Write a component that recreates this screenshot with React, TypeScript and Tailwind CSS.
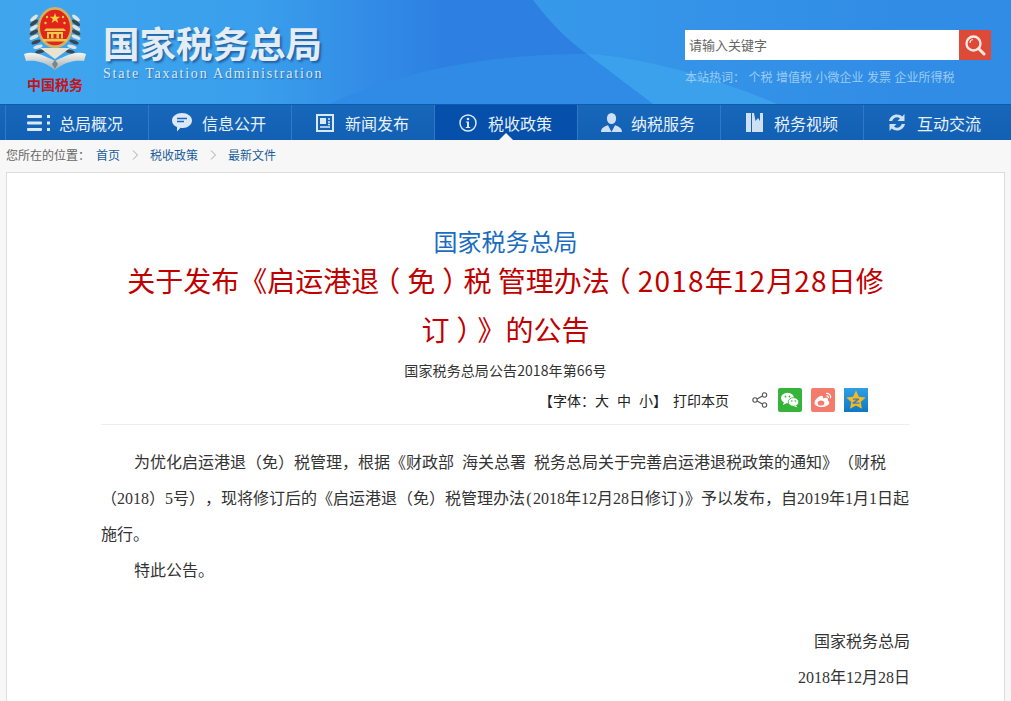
import React from "react";

const CJK = "font-['Noto_Sans_CJK_SC',sans-serif]";

function Emblem() {
  const leaves = [0, 1, 2, 3, 4, 5, 6, 7];
  return (
    <svg width="64" height="65" viewBox="0 0 64 65" className="block">
      <defs>
        <linearGradient id="rib" x1="0" y1="0" x2="0" y2="1">
          <stop offset="0" stopColor="#f6f6ef" />
          <stop offset="1" stopColor="#9fadb4" />
        </linearGradient>
      </defs>
      {leaves.map((i) => {
        const y = 11 + i * 4.800;
        const dx = i > 4 ? (i - 4) * 2 : 0;
        return (
          <g key={i}>
            <ellipse cx={11 + dx} cy={y} rx="4.800" ry="1.800" fill={i % 2 ? "#3a474e" : "#dfe4e0"} transform={`rotate(${-40 + i * 4} ${11 + dx} ${y})`} />
            <ellipse cx={53 - dx} cy={y} rx="4.800" ry="1.800" fill={i % 2 ? "#3a474e" : "#dfe4e0"} transform={`rotate(${40 - i * 4} ${53 - dx} ${y})`} />
          </g>
        );
      })}
      <ellipse cx="32" cy="20.500" rx="17.500" ry="20.500" fill="#d3b25e" />
      <ellipse cx="32" cy="20.500" rx="15" ry="17.800" fill="#e2241c" />
      <path d="M32 6l1.300 3.800h4l-3.200 2.300 1.200 3.800-3.300-2.300-3.300 2.300 1.200-3.800-3.200-2.300h4z" fill="#f6d23c" />
      <circle cx="24" cy="10" r="1.200" fill="#f6d23c" />
      <circle cx="40" cy="10" r="1.200" fill="#f6d23c" />
      <circle cx="22.500" cy="16" r="1.200" fill="#f6d23c" />
      <circle cx="41.500" cy="16" r="1.200" fill="#f6d23c" />
      <path d="M21 24h22l-2-2.500H23zM24 25h16v6.500H24z" fill="#f0c84a" />
      <path d="M30.500 27h3v4.500h-3zM26 27h2v4.500h-2zM36 27h2v4.500h-2z" fill="#e2241c" />
      <path d="M20 32h24v2.500H20z" fill="#f0c84a" />
      <path d="M1 47c8-3 16-1 31 7 15-8 23-10 31-7l-2 7c-10-1-19 1-29 9-10-8-19-10-29-9z" fill="url(#rib)" />
      <path d="M17 41h30L32 52z" fill="#e9e4d2" />
      <path d="M29 57l3-4 3 4-3 5z" fill="#79858a" />
    </svg>
  );
}

function MenuIcon() {
  return (
    <svg width="24" height="18" viewBox="0 0 24 18" fill="#dbe8f6">
      <rect x="0" y="1" width="15" height="3" rx="1" />
      <rect x="0" y="7.500" width="15" height="3" rx="1" />
      <rect x="0" y="14" width="15" height="3" rx="1" />
      <rect x="20" y="1" width="3" height="3" />
      <rect x="20" y="7.500" width="3" height="3" />
      <rect x="20" y="14" width="3" height="3" />
    </svg>
  );
}

function ChatIcon() {
  return (
    <svg width="20" height="19" viewBox="0 0 20 19">
      <path d="M10 0c5.500 0 10 3.300 10 7.500S15.500 15 11 15c-1 0-2-.1-2.500-.2L5 18.500v-4.500C2 13 0 10.500 0 7.500 0 3.300 4.500 0 10 0z" fill="#dbe8f6" />
      <path d="M5 5.500h10M5 8.500h7" stroke="#1a66b8" strokeWidth="1.500" />
    </svg>
  );
}

function NewsIcon() {
  return (
    <svg width="18" height="18" viewBox="0 0 18 18" fill="none">
      <rect x="1" y="1" width="16" height="16" stroke="#dbe8f6" strokeWidth="2" />
      <rect x="4" y="4" width="6" height="6" fill="#dbe8f6" />
      <path d="M4 13h10M12 5h2M12 8h2M12 10.500h2" stroke="#dbe8f6" strokeWidth="1.500" />
    </svg>
  );
}

function InfoIcon() {
  return (
    <svg width="18" height="18" viewBox="0 0 18 18" fill="none">
      <circle cx="9" cy="9" r="8" stroke="#dbe8f6" strokeWidth="1.500" />
      <circle cx="9" cy="5" r="1.300" fill="#dbe8f6" />
      <path d="M7 7.500h3v5.500h1.200v1H6.800v-1H8V8.500H7z" fill="#dbe8f6" />
    </svg>
  );
}

function UserIcon() {
  return (
    <svg width="21" height="19" viewBox="0 0 21 19" fill="#cfe0f3">
      <ellipse cx="10.500" cy="5.500" rx="4.600" ry="5.500" />
      <path d="M0 19c0-4 3-5.500 7-6.800l3.500 6.800 3.500-6.800c4 1.300 7 2.800 7 6.800z" />
    </svg>
  );
}

function VideoIcon() {
  return (
    <svg width="17" height="19" viewBox="0 0 17 19" fill="#cfe0f3">
      <rect x="0" y="0" width="5" height="19" />
      <path d="M6 0h2l1.500 8L12 5l2 3V0h3v19H6z" />
    </svg>
  );
}

function SwapIcon() {
  return (
    <svg width="18" height="17" viewBox="0 0 18 17" fill="#cfe0f3">
      <path d="M1 7c1-4 4-6.500 8-6.500 2.200 0 4 .8 5.200 2L16.500 0v7H9.500l2.500-2.500C11 3.700 10 3.300 9 3.300 6.800 3.300 5 4.800 4.200 7z" />
      <path d="M17 10c-1 4-4 6.500-8 6.500-2.200 0-4-.8-5.200-2L1.500 17v-7h7L6 12.500c1 .8 2 1.200 3 1.200 2.200 0 4-1.500 4.800-3.700z" />
    </svg>
  );
}

function Chevron() {
  return (
    <span className="flex w-[30px] justify-center">
      <svg width="6" height="10" viewBox="0 0 6 10" fill="none" stroke="#a3a9ad">
        <path d="M1 .5L5.500 5 1 9.500" />
      </svg>
    </span>
  );
}

function Paren({ children }: { children: string }) {
  return <span className="inline-block w-[28px] text-center [font-feature-settings:'halt']">{children}</span>;
}

function Digits({ children }: { children: string }) {
  return <span className="tracking-[1.200px]">{children}</span>;
}

function Half({ children }: { children: string }) {
  return <span className="px-[1.330px]">{children}</span>;
}

function Wechat() {
  return (
    <svg width="24" height="24" viewBox="0 0 24 24" className="block">
      <rect width="24" height="24" rx="2" fill="#36b43a" />
      <ellipse cx="9.500" cy="10" rx="6.500" ry="5.300" fill="#fff" />
      <path d="M6 14l-1 3 3.500-1.800z" fill="#fff" />
      <ellipse cx="15.500" cy="14" rx="5.300" ry="4.300" fill="#fff" stroke="#36b43a" strokeWidth="0.800" />
      <path d="M18 17.500l1.500 2-3.500-1.200z" fill="#fff" />
      <circle cx="7.500" cy="8.500" r="0.900" fill="#36b43a" />
      <circle cx="11.500" cy="8.500" r="0.900" fill="#36b43a" />
      <circle cx="13.800" cy="13" r="0.800" fill="#36b43a" />
      <circle cx="17.200" cy="13" r="0.800" fill="#36b43a" />
    </svg>
  );
}

function Weibo() {
  return (
    <svg width="24" height="24" viewBox="0 0 24 24" className="block">
      <rect width="24" height="24" rx="2" fill="#f47a6c" />
      <path d="M10.500 19c-4 0-7-1.800-7-4.300 0-2.700 4.500-7 7-7 1.800 0 1.800 1.700 1.500 2.800 2.500-1 5-1 5 1 .1.400 0 .8-.2 1.200 1 .4 1.500 1 1.500 2 0 2.300-3.600 4.300-7.800 4.300z" fill="#fff" />
      <ellipse cx="10" cy="15" rx="3.300" ry="2.600" fill="#f47a6c" />
      <path d="M15 5.500c3-.6 5.300 1.800 4.500 4.800M15.400 8c1.500-.2 2.300.8 2 2" stroke="#fff" strokeWidth="1.200" fill="none" />
    </svg>
  );
}

function Qzone() {
  return (
    <svg width="24" height="24" viewBox="0 0 24 24" className="block">
      <defs>
        <linearGradient id="qz" x1="0" y1="0" x2="0" y2="1">
          <stop offset="0" stopColor="#2f9fe6" />
          <stop offset="1" stopColor="#0f78c4" />
        </linearGradient>
      </defs>
      <rect width="24" height="24" fill="url(#qz)" />
      <path d="M12 2.500l2.900 6.200 6.800.8-5 4.600 1.300 6.700L12 17.500l-6 3.300 1.300-6.700-5-4.600 6.800-.8z" fill="#f7b81f" />
      <path d="M9 10.500h6v1.200l-3.500 2.800H15.500v1.300H8.500v-1.200l3.800-2.900H9z" fill="#3f7fc0" />
    </svg>
  );
}

const nav: [string, React.ReactNode][] = [
  ["总局概况", <MenuIcon />],
  ["信息公开", <ChatIcon />],
  ["新闻发布", <NewsIcon />],
  ["税收政策", <InfoIcon />],
  ["纳税服务", <UserIcon />],
  ["税务视频", <VideoIcon />],
  ["互动交流", <SwapIcon />],
];

export default function App() {
  return (
    <div className={`h-[701px] w-[1011px] overflow-hidden bg-[#f7f7f7] [text-spacing-trim:space-all] ${CJK}`}>
      <header className="relative h-[104px] overflow-hidden bg-[linear-gradient(90deg,#3fa6ee_0%,#3a9fec_25%,#2d80e2_44%,#2d80e2_60%)]">
        <svg className="absolute inset-0" width="1011" height="104" viewBox="0 0 1011 104">
          <defs>
            <linearGradient id="hdr" x1="533" y1="0" x2="900" y2="0" gradientUnits="userSpaceOnUse">
              <stop offset="0" stopColor="#3799ea" />
              <stop offset="1" stopColor="#318ce5" />
            </linearGradient>
          </defs>
          <path d="M533 0C550 22 565 38 587 54L653 104H1011V0z" fill="url(#hdr)" />
          <path d="M330 104C400 70 500 53 587 54L653 104z" fill="#2f8be6" />
          <path d="M587 54C650 58 720 80 777 104H653z" fill="#3ba1ed" />
        </svg>
        <div className="relative flex h-full">
          <div className="ml-[23px] flex w-[64px] flex-col items-center pt-[7px]">
            <Emblem />
            <div className="w-[60px] whitespace-nowrap text-center text-[14px] leading-[24px] font-bold text-[#c4131a]">
              中国税务
            </div>
          </div>
          <div className="ml-[16px] pt-[23px]">
            <div className="whitespace-nowrap text-[36.500px] leading-[40px] font-bold text-[#e4edf4] [text-shadow:2px_2px_2px_rgba(20,60,120,0.6)]">
              国家税务总局
            </div>
            <div className="mt-[2px] whitespace-nowrap text-[14px] leading-[18px] tracking-[1.820px] text-[#dbe8f2] font-['Liberation_Serif',serif] [text-shadow:1px_1px_1px_rgba(20,60,120,0.5)]">
              State Taxation Administration
            </div>
          </div>
          <div className="ml-auto mr-[20px] pt-[30px]">
            <div className="flex h-[30px] w-[306px]">
              <div className="flex flex-1 items-center bg-white pb-[1px] pl-[4px] text-[13px] text-[#666]">请输入关键字</div>
              <div className="flex w-[32px] items-center justify-center bg-[#dd4a38]">
                <svg width="22" height="22" viewBox="0 0 22 22" fill="none" stroke="#f8e8e4">
                  <circle cx="9.500" cy="9.500" r="7" strokeWidth="2.400" />
                  <path d="M15 15l5 5" strokeWidth="3" strokeLinecap="round" />
                  <path d="M6 9c0-2 1.300-3.300 3-3.500" strokeWidth="1.200" />
                </svg>
              </div>
            </div>
            <div className="mt-[8px] flex gap-[3.500px] whitespace-nowrap text-[12px] leading-[18px] text-[#9accf3]">
              <span>本站热词：</span>
              <span>个税</span>
              <span>增值税</span>
              <span>小微企业</span>
              <span>发票</span>
              <span>企业所得税</span>
            </div>
          </div>
        </div>
      </header>

      <nav className="h-[36px] border-t border-[#0f5cab] bg-[linear-gradient(180deg,#1767bb,#1260b3)] pl-[5px]">
        <div className="flex h-[35px]">
          {nav.map(([label, icon], i) => (
            <div
              key={label}
              className={`relative flex h-full w-[143px] items-center border-l border-[#3079c6] ${i === 3 ? "bg-[#0650ab]" : ""}`}
            >
              <div className="ml-[13px] flex w-[40px] items-center justify-center">{icon}</div>
              <span className="pt-[1px] text-[16px] leading-[35px] whitespace-nowrap text-[#e8f0f8]">{label}</span>
              {i === 3 && (
                <div className="absolute bottom-0 left-[71px] h-0 w-0 -translate-x-1/2 border-x-[7px] border-b-[7px] border-x-transparent border-b-[#f7f7f7]" />
              )}
            </div>
          ))}
        </div>
      </nav>

      <div className="flex h-[32px] items-center pb-[2px] pl-[6px] text-[12px] whitespace-nowrap text-[#666]">
        <span className="w-[90px]">您所在的位置：</span>
        <span className="text-[#1a5c9a]">首页</span>
        <Chevron />
        <span className="text-[#1a5c9a]">税收政策</span>
        <Chevron />
        <span className="text-[#1a5c9a]">最新文件</span>
      </div>

      <main className="mx-[6px] h-[600px] border border-[#dcdcdc] bg-white px-[94px] pt-[51px]">
        <h2 className="text-center text-[24px] leading-[34px] text-[#1a6dbf]">国家税务总局</h2>
        <h1 className="mt-[-2px] text-center text-[28px] leading-[49px] text-[#c00000]">
          关于发布《启运港退<Paren>（</Paren>免<Paren>）</Paren>税 管理办法<Paren>（</Paren><Digits>2018</Digits>年<Digits>12</Digits>月<Digits>28</Digits>日修
          <br />
          订<Paren>）</Paren>》的公告
        </h1>
        <p className="mt-[4px] text-center text-[14px] leading-[24px] tracking-[0.100px] text-[#333]">国家税务总局公告2018年第66号</p>
        <div className="mt-[3px] flex h-[30px] items-center pl-[438px] text-[14px] whitespace-nowrap text-[#222]">
          <span className="w-[134px]">
            【字体：<span>大</span>
            <span className="ml-[8px]">中</span>
            <span className="ml-[8px]">小</span>】
          </span>
          <span className="w-[79px]">打印本页</span>
          <svg width="16" height="16" viewBox="0 0 16 16" fill="none" stroke="#555" strokeWidth="1.100" className="mr-[10px]">
            <circle cx="12.500" cy="3" r="2.200" />
            <circle cx="3" cy="8" r="2.200" />
            <circle cx="12.500" cy="13" r="2.200" />
            <path d="M5 7l5.500-3M5 9l5.500 3" />
          </svg>
          <div className="mr-[9px]">
            <Wechat />
          </div>
          <div className="mr-[9px]">
            <Weibo />
          </div>
          <Qzone />
        </div>
        <div className="mt-[9px] h-px bg-[#eeeeee]" />
        <div className="mt-[20px] text-[16px] leading-[36px] text-[#333] [word-spacing:4px] font-['Liberation_Serif','Noto_Sans_CJK_SC',serif]">
          <p className="indent-[33px]">
            为优化启运港退（免）税管理，根据《财政部 海关总署 税务总局关于完善启运港退税政策的通知》（财税（2018）5号），现将修订后的《启运港退（免）税管理办法<Half>(</Half>2018年12月28日修订<Half>)</Half>》予以发布，自2019年1月1日起施行。
          </p>
          <p className="indent-[33px]">特此公告。</p>
          <p className="mt-[35px] text-right">国家税务总局</p>
          <p className="text-right">2018年12月28日</p>
        </div>
      </main>
    </div>
  );
}
